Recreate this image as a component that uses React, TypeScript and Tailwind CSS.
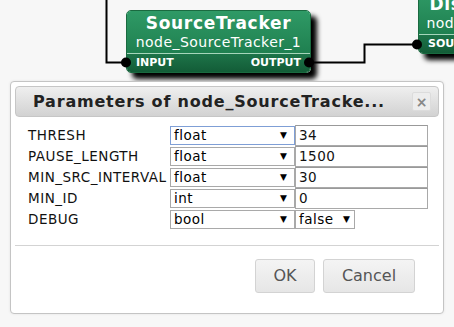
import React from 'react';

type Param = { name: string; type: string; value: string };

const params: Param[] = [
  { name: 'THRESH', type: 'float', value: '34' },
  { name: 'PAUSE_LENGTH', type: 'float', value: '1500' },
  { name: 'MIN_SRC_INTERVAL', type: 'float', value: '30' },
  { name: 'MIN_ID', type: 'int', value: '0' },
  { name: 'DEBUG', type: 'bool', value: 'false' },
];

// Fake select box, drawn like the old browser default
const SelectBox = ({ label, focused, className }: { label: string; focused?: boolean; className?: string }) => (
  <div
    className={
      'flex items-center justify-between bg-white border pl-[3px] pr-[7px] text-black ' +
      (focused ? 'border-[#7f9fd6] ' : 'border-[#a9a9a9] ') +
      (className || '')
    }
  >
    <span>{label}</span>
    <span className="text-[9px] leading-none tracking-normal">▼</span>
  </div>
);

const Node = ({ title, sub, inPort, outPort, className }: { title: string; sub: string; inPort: string; outPort?: string; className: string }) => (
  <div className={'absolute rounded-[5px] overflow-hidden shadow-[6px_6px_5px_#000] border border-[#1a6a40] ' + className}>
    <div className="flex flex-col items-center h-[42px] bg-gradient-to-b from-[#2f9a66] to-[#1f8050] text-white">
      <div className="text-[17px] font-bold leading-[20px] mt-[2px] tracking-[0.7px] whitespace-nowrap">{title}</div>
      <div className="text-[14px] leading-[18px] tracking-[0.45px] whitespace-nowrap">{sub}</div>
    </div>
    <div className="h-[1px] bg-[#a6d6bb]" />
    <div className="flex justify-between items-center h-[18px] px-[9px] bg-gradient-to-b from-[#1d7449] to-[#135c37] text-white text-[11px] font-bold">
      <span>{inPort}</span>
      {outPort && <span>{outPort}</span>}
    </div>
  </div>
);

export default function App() {
  return (
    <div
      className="relative w-[454px] h-[327px] overflow-hidden bg-[#f7f7f7]"
      style={{ fontFamily: '"DejaVu Sans", Verdana, sans-serif' }}
    >
      {/* wires between nodes */}
      <svg className="absolute inset-0" width="454" height="327">
        <path d="M106.5 0 V62.5 H126" stroke="#000" strokeWidth="2" fill="none" />
        <path d="M310 62.5 H364.5 V44.5 H417" stroke="#000" strokeWidth="2" fill="none" />
      </svg>

      <Node
        title="SourceTracker"
        sub="node_SourceTracker_1"
        inPort="INPUT"
        outPort="OUTPUT"
        className="left-[126px] top-[10px] w-[185px]"
      />
      <Node
        title="DisplayLocalization"
        sub="node_DisplayLocalization_1"
        inPort="SOURCES"
        className="left-[418px] top-[-9px] w-[221px]"
      />

      <svg className="absolute inset-0 pointer-events-none" width="454" height="327">
        <circle cx="126" cy="62.5" r="5" fill="#000" />
        <circle cx="309" cy="62.5" r="5" fill="#000" />
        <circle cx="417" cy="44.5" r="5" fill="#000" />
      </svg>

      {/* parameters dialog */}
      <div className="absolute left-[10px] top-[81px] w-[434px] h-[233px] flex flex-col bg-white border border-[#c4c4c4] rounded-[4px] p-[4px] shadow-[0_0_3px_rgba(0,0,0,0.08)]">
        <div className="flex items-center justify-between h-[31px] pl-[17px] pr-[7px] rounded-[4px] border border-[#c6c6c6] bg-gradient-to-b from-[#efefef] to-[#d2d2d2]">
          <span className="text-[16px] font-bold text-[#222] tracking-[0.8px] whitespace-nowrap">Parameters of node_SourceTracke...</span>
          <span className="flex items-center justify-center w-[19px] h-[19px] bg-[#ededed] border border-[#dcdcdc] rounded-[2px] text-[#888] text-[14px] font-bold leading-none">
            ×
          </span>
        </div>

        <div className="grid grid-cols-[142px_125px_133px] auto-rows-[21px] ml-[13px] mt-[8px] text-[13.5px] tracking-[0.5px] text-[#111]">
          {params.map((p, i) => (
            <React.Fragment key={p.name}>
              <div className="flex items-center whitespace-nowrap">{p.name}</div>
              <div className="flex items-center">
                <SelectBox label={p.type} focused={i === 0} className="w-full h-[19px]" />
              </div>
              <div className="flex items-center">
                {p.type === 'bool' ? (
                  <SelectBox label={p.value} className="w-[60px] h-[19px] !pr-[4px] gap-1" />
                ) : (
                  <div className="flex items-center w-full h-[21px] bg-white border border-[#a9a9a9] border-t-[#999] pl-[3px]">
                    {p.value}
                  </div>
                )}
              </div>
            </React.Fragment>
          ))}
        </div>

        <div className="mt-[15px] border-t border-[#d3d3d3] flex justify-end gap-[8px] pr-[24px] pt-[13px]">
          <button className="w-[60px] h-[34px] rounded-[3px] border border-[#d3d3d3] bg-gradient-to-b from-[#f4f4f4] to-[#e6e6e6] text-[16px] text-[#555]">
            OK
          </button>
          <button className="w-[92px] h-[34px] rounded-[3px] border border-[#d3d3d3] bg-gradient-to-b from-[#f4f4f4] to-[#e6e6e6] text-[16px] text-[#555]">
            Cancel
          </button>
        </div>
      </div>
    </div>
  );
}
